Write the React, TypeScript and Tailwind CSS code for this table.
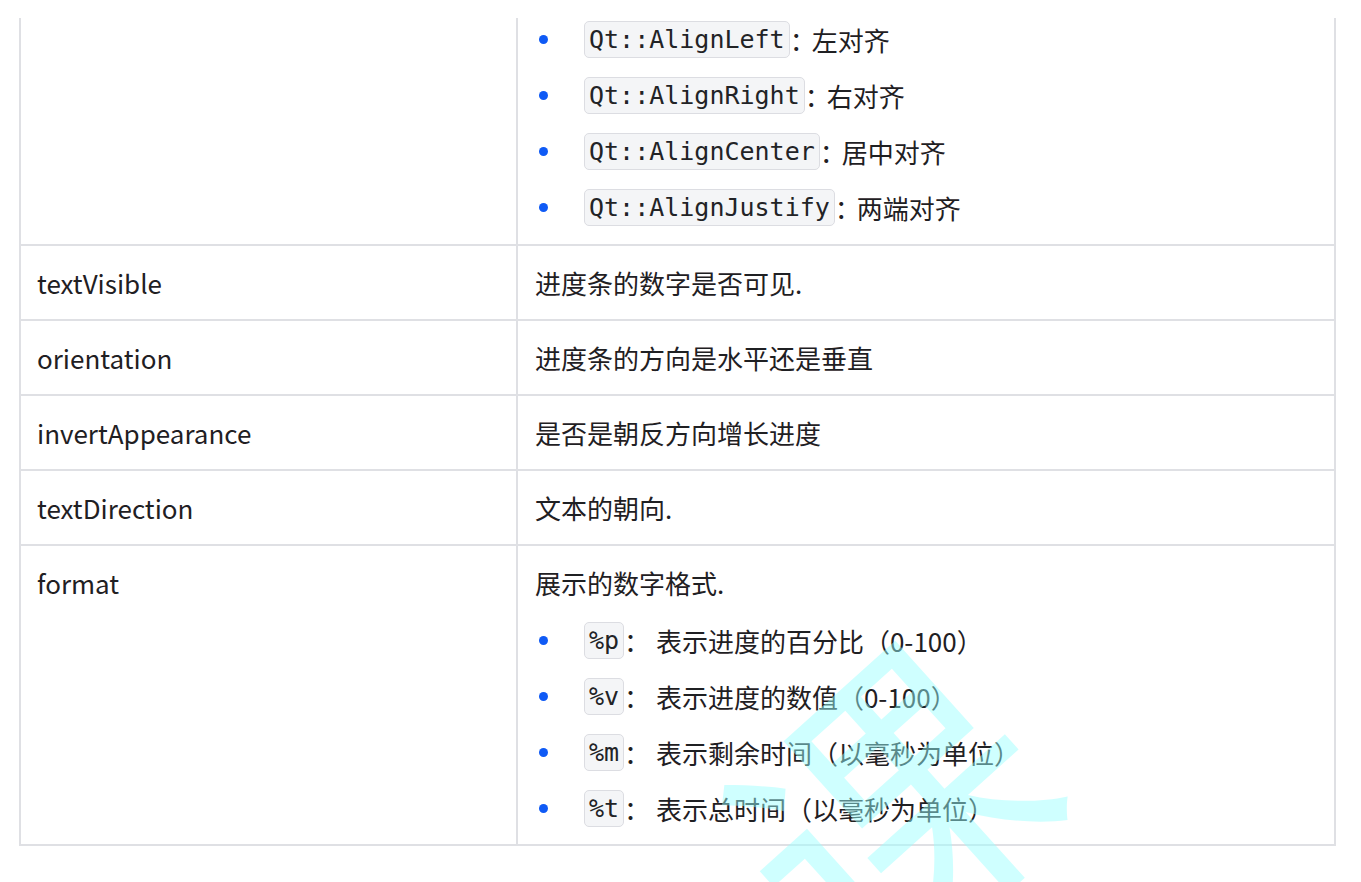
import React from 'react';

type Item = { code: string; text: string };

const alignItems: Item[] = [
  { code: 'Qt::AlignLeft', text: '左对齐' },
  { code: 'Qt::AlignRight', text: '右对齐' },
  { code: 'Qt::AlignCenter', text: '居中对齐' },
  { code: 'Qt::AlignJustify', text: '两端对齐' },
];

const formatItems: Item[] = [
  { code: '%p', text: '表示进度的百分比（0-100）' },
  { code: '%v', text: '表示进度的数值（0-100）' },
  { code: '%m', text: '表示剩余时间（以毫秒为单位）' },
  { code: '%t', text: '表示总时间（以毫秒为单位）' },
];

const simpleRows = [
  { name: 'textVisible', desc: '进度条的数字是否可见.' },
  { name: 'orientation', desc: '进度条的方向是水平还是垂直' },
  { name: 'invertAppearance', desc: '是否是朝反方向增长进度' },
  { name: 'textDirection', desc: '文本的朝向.' },
];

const sans = 'font-["Noto_Sans_CJK_SC","Noto_Sans",sans-serif]';

// bullet list with an inline code chip followed by a description
const BulletList: React.FC<{ items: Item[]; wide?: boolean }> = ({ items, wide }) => (
  <ul className="flex flex-col gap-[16px]">
    {items.map((it) => (
      <li key={it.code} className="flex h-[40px] items-center">
        <span className="ml-[4px] mr-[36px] h-[9px] w-[9px] shrink-0 rounded-full bg-[#0f5af5]" />
        <code className='rounded-[5px] border border-[#dcdde2] bg-[#f4f5f7] px-1 font-["DejaVu_Sans_Mono","Liberation_Mono",monospace] text-[25px] leading-[35px] text-[#222326]'>
          {it.code}
        </code>
        {wide ? (
          <span className="whitespace-pre">{'： '}</span>
        ) : (
          <span className="inline-block w-[22px]">：</span>
        )}
        <span>{it.text}</span>
      </li>
    ))}
  </ul>
);

export default function App() {
  return (
    <div className={`relative min-h-[882px] overflow-hidden bg-white ${sans} text-[26px] leading-[41px] text-[#1f2023]`}>
      <div className="pl-[19px] pt-[18px]">
        <div className="grid w-[1317px] grid-cols-[497px_1fr] border-x-2 border-b-2 border-[#dfe0e4]">
          {/* alignment row, top is scrolled out of view */}
          <div className="border-r-2 border-[#dfe0e4]" />
          <div className="pb-[17px] pl-[17px] pt-[1px]">
            <BulletList items={alignItems} />
          </div>

          {simpleRows.map((r) => (
            <React.Fragment key={r.name}>
              <div className="border-r-2 border-t-2 border-[#dfe0e4] px-4 py-4">{r.name}</div>
              <div className="border-t-2 border-[#dfe0e4] px-[17px] py-4">{r.desc}</div>
            </React.Fragment>
          ))}

          <div className="border-r-2 border-t-2 border-[#dfe0e4] px-4 py-4">format</div>
          <div className="border-t-2 border-[#dfe0e4] px-[17px] py-4">
            <p>展示的数字格式.</p>
            <div className="mt-[17px]">
              <BulletList items={formatItems} wide />
            </div>
          </div>
        </div>
      </div>

      {/* watermark */}
      <div className="pointer-events-none absolute left-[730px] top-[650px] rotate-[-42deg] select-none text-[300px] leading-none text-[rgba(154,255,255,0.47)]">
        课
      </div>
    </div>
  );
}
